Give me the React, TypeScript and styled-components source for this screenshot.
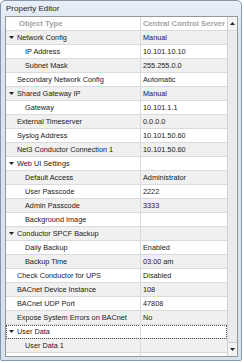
import styled, { createGlobalStyle } from 'styled-components'

type Row = {
  label: string
  value?: string
  level?: number
  expand?: boolean
  focused?: boolean
}

const rows: Row[] = [
  { label: 'Network Config', expand: true, value: 'Manual' },
  { label: 'IP Address', level: 1, value: '10.101.10.10' },
  { label: 'Subnet Mask', level: 1, value: '255.255.0.0' },
  { label: 'Secondary Network Config', value: 'Automatic' },
  { label: 'Shared Gateway IP', expand: true, value: 'Manual' },
  { label: 'Gateway', level: 1, value: '10.101.1.1' },
  { label: 'External Timeserver', value: '0.0.0.0' },
  { label: 'Syslog Address', value: '10.101.50.60' },
  { label: 'Net3 Conductor Connection 1', value: '10.101.50.60' },
  { label: 'Web UI Settings', expand: true },
  { label: 'Default Access', level: 1, value: 'Administrator' },
  { label: 'User Passcode', level: 1, value: '2222' },
  { label: 'Admin Passcode', level: 1, value: '3333' },
  { label: 'Background Image', level: 1 },
  { label: 'Conductor SPCF Backup', expand: true },
  { label: 'Daily Backup', level: 1, value: 'Enabled' },
  { label: 'Backup Time', level: 1, value: '03:00 am' },
  { label: 'Check Conductor for UPS', value: 'Disabled' },
  { label: 'BACnet Device Instance', value: '108' },
  { label: 'BACnet UDP Port', value: '47808' },
  { label: 'Expose System Errors on BACnet', value: 'No' },
  { label: 'User Data', expand: true, focused: true },
  { label: 'User Data 1', level: 1 },
  { label: 'User Data 2', level: 1 },
]

const Arrow = ({ up }: { up?: boolean }) => (
  <svg width="5" height="3" viewBox="0 0 5 3">
    <path d={up ? 'M0 3 L2.5 0 L5 3 Z' : 'M0 0 L5 0 L2.5 3 Z'} fill="#222" />
  </svg>
)

const App = () => {
  return (
    <>
      <GlobalStyle />
      <Window>
        <Title>Property Editor</Title>
        <Panel>
          <Grid>
            <HeaderCell>Object Type</HeaderCell>
            <HeaderCell $value>Central Control Server</HeaderCell>
            {rows.map((r, i) => (
              <GridRow key={r.label} $shade={i % 2 === 0} $focused={r.focused}>
                <NameCell $level={r.level || 0}>
                  {r.expand && (
                    <Toggle>
                      <Arrow />
                    </Toggle>
                  )}
                  {r.label}
                </NameCell>
                <ValueCell>{r.value}</ValueCell>
              </GridRow>
            ))}
          </Grid>
          <ScrollBar>
            <ScrollButton>
              <Arrow up />
            </ScrollButton>
            <Thumb />
            <ScrollButton>
              <Arrow />
            </ScrollButton>
          </ScrollBar>
        </Panel>
      </Window>
    </>
  )
}

export default App

const GlobalStyle = createGlobalStyle`
  body {
    margin: 0;
    background: #ffffff;
    font-family: "Liberation Sans", Arial, sans-serif;
  }
`

const Window = styled.div`
  box-sizing: border-box;
  width: 242px;
  height: 361px;
  display: flex;
  flex-direction: column;
  padding: 0 3px 3px 4px;
  border: 1px solid #8797ab;
  border-radius: 5px 5px 2px 2px;
  background: linear-gradient(#e9eff7, #dbe5f1 30px, #d7e2ef);
  overflow: hidden;
`

const Title = styled.div`
  height: 15px;
  line-height: 15px;
  font-size: 8px;
  color: #1e1e1e;
  padding-left: 1px;
`

const Panel = styled.div`
  flex: 1;
  display: flex;
  border: 1px solid #979797;
  background: #ffffff;
  overflow: hidden;
`

const Grid = styled.div`
  flex: 1;
  display: grid;
  grid-template-columns: 135px 1fr;
  grid-auto-rows: 14px;
  align-content: start;
  font-size: 7.3px;
  color: #1a1a1a;
`

const HeaderCell = styled.div<{ $value?: boolean }>`
  box-sizing: border-box;
  line-height: 13px;
  padding-left: ${(p) => (p.$value ? '2px' : '13px')};
  font-size: 7.7px;
  font-weight: bold;
  color: #a3a3a3;
  border-bottom: 1px solid #dadada;
  border-right: ${(p) => (p.$value ? 'none' : '1px solid #dadada')};
  white-space: nowrap;
  overflow: hidden;
`

const GridRow = styled.div<{ $shade: boolean; $focused?: boolean }>`
  grid-column: 1 / 3;
  display: grid;
  grid-template-columns: subgrid;
  box-sizing: border-box;
  background: ${(p) => (p.$shade ? '#f0f0f0' : '#ffffff')};
  border-bottom: 1px solid #dadada;
  outline: ${(p) => (p.$focused ? '1px dotted #555' : 'none')};
  outline-offset: -1px;
`

const NameCell = styled.div<{ $level: number }>`
  position: relative;
  line-height: 13px;
  padding-left: ${(p) => (p.$level ? 19 : 11)}px;
  border-right: 1px solid #dadada;
  white-space: nowrap;
  overflow: hidden;
`

const Toggle = styled.span`
  position: absolute;
  left: 3px;
  top: 5px;
  display: flex;
`

const ValueCell = styled.div`
  line-height: 13px;
  padding-left: 2px;
  white-space: nowrap;
  overflow: hidden;
`

const ScrollBar = styled.div`
  width: 9px;
  display: flex;
  flex-direction: column;
  background: #ececec;
  border-left: 1px solid #d2d2d2;
`

const ScrollButton = styled.div`
  height: 13px;
  display: flex;
  align-items: center;
  justify-content: center;
  background: #f3f3f3;
`

const Thumb = styled.div`
  flex: 1;
  background: #ebebeb;
  border-top: 1px solid #dcdcdc;
  border-bottom: 1px solid #c9c9c9;
`
